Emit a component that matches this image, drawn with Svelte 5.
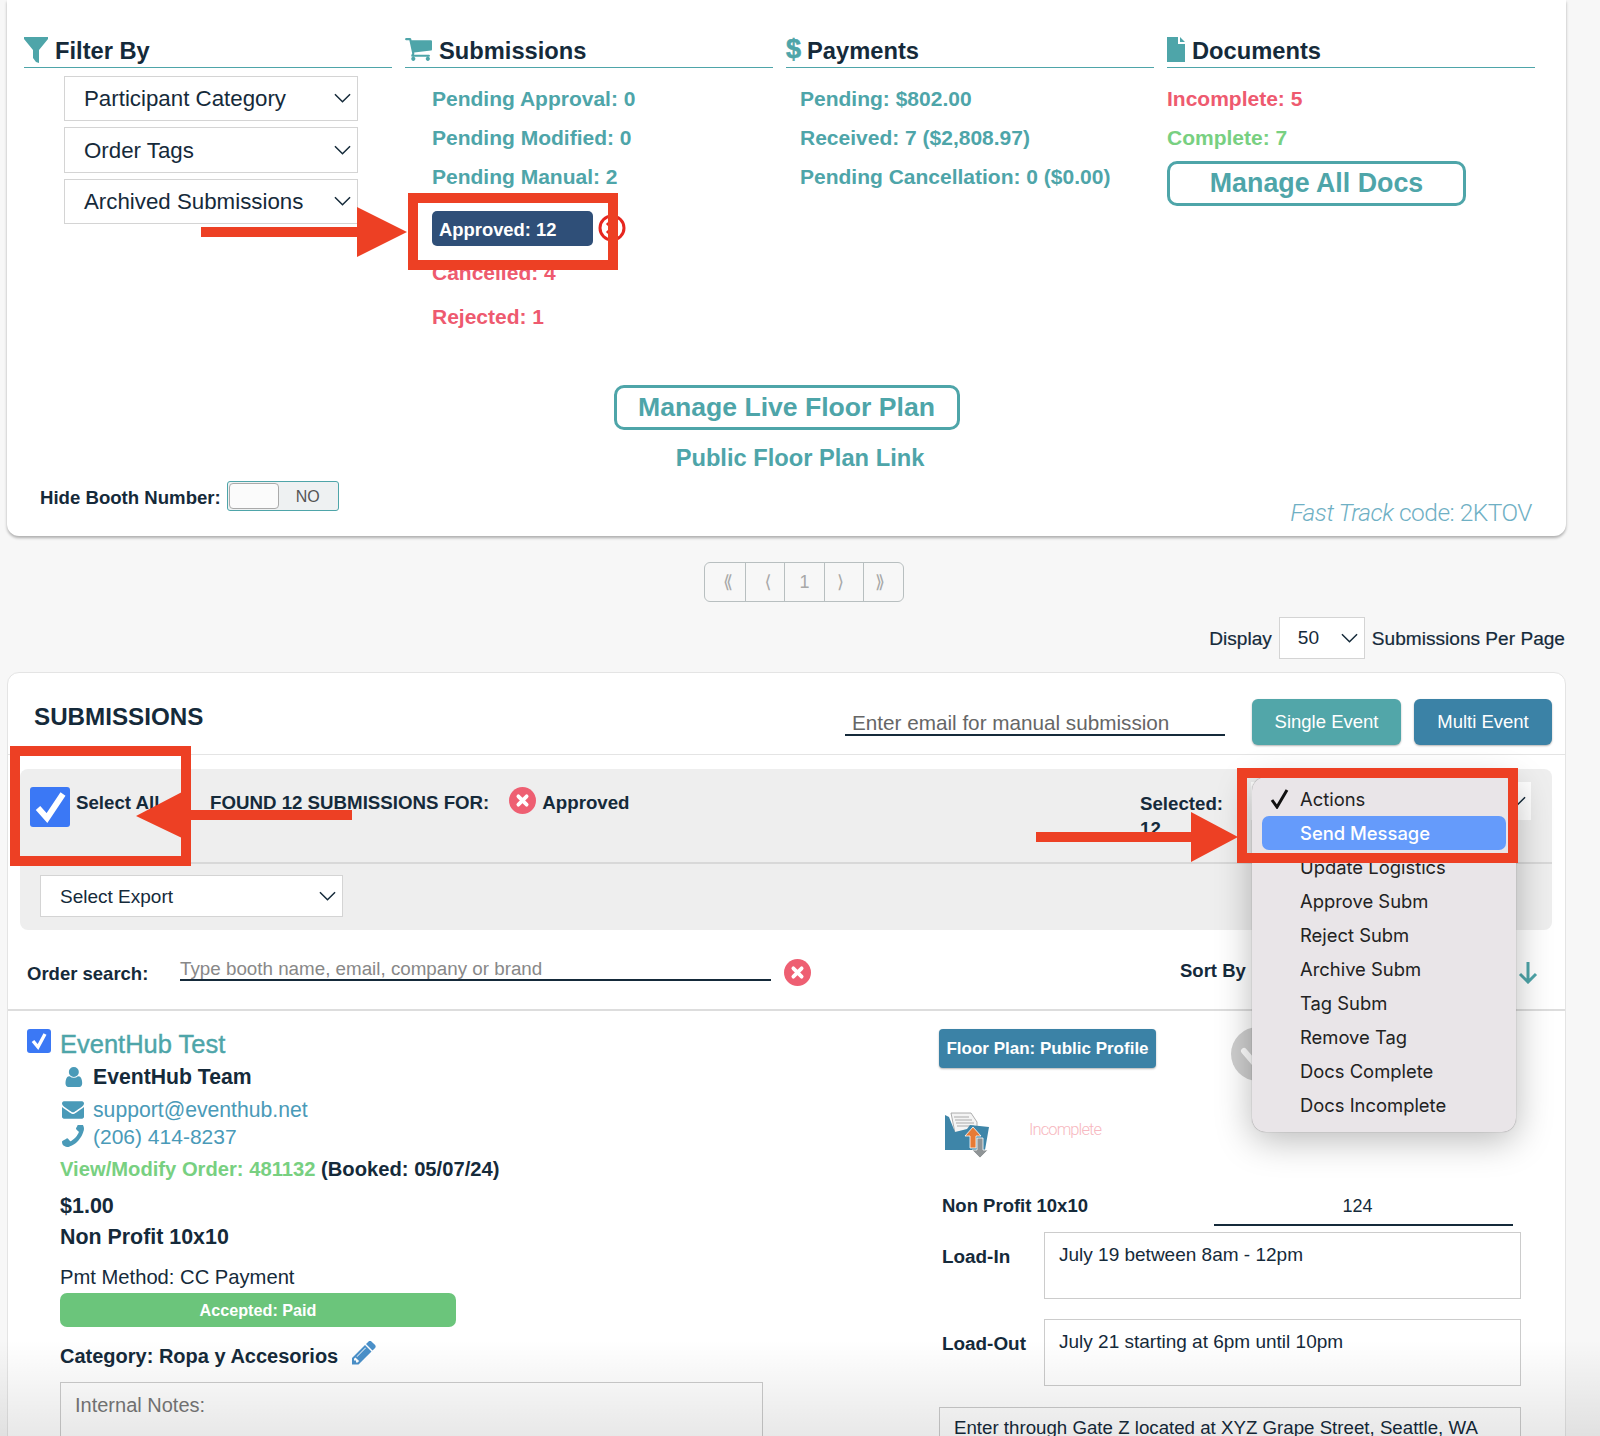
<script>
	const pendingStats = ['Pending Approval: 0', 'Pending Modified: 0', 'Pending Manual: 2'];
	const paymentStats = ['Pending: $802.00', 'Received: 7 ($2,808.97)', 'Pending Cancellation: 0 ($0.00)'];
	const filters = ['Participant Category', 'Order Tags', 'Archived Submissions'];
	const pages = ['⟪', '⟨', '1', '⟩', '⟫'];
	const actions = [
		'Actions',
		'Send Message',
		'Update Logistics',
		'Approve Subm',
		'Reject Subm',
		'Archive Subm',
		'Tag Subm',
		'Remove Tag',
		'Docs Complete',
		'Docs Incomplete'
	];

	const cartPath =
		'M704 1536q0 52-38 90t-90 38-90-38-38-90 38-90 90-38 90 38 38 90zm896 0q0 52-38 90t-90 38-90-38-38-90 38-90 90-38 90 38 38 90zm128-1088v512q0 24-16.500 42.500t-40.500 21.500l-1044 122q13 60 13 70 0 16-24 64h920q26 0 45 19t19 45-19 45-45 19h-1024q-26 0-45-19t-19-45q0-11 8-31.500t16-36 21.500-40 15.500-29.500l-177-823h-204q-26 0-45-19t-19-45 19-45 45-19h256q16 0 28.500 6.500t19.500 15.500 13 24.500 8 26 5.500 29.500 4.500 26h1201q26 0 45 19t19 45z';
	const userPath =
		'M1536 1399q0 109-62.500 187t-150.500 78h-854q-88 0-150.500-78t-62.500-187q0-85 8.500-160.500t31.500-152 58.500-131 94-89 134.500-34.500q131 128 313 128t313-128q76 0 134.500 34.500t94 89 58.500 131 31.500 152 8.500 160.500zm-256-887q0 159-112.500 271.500t-271.500 112.500-271.500-112.500-112.500-271.500 112.500-271.500 271.500-112.500 271.500 112.500 112.500 271.500z';
	const mailPath =
		'M1792 710v794q0 66-47 113t-113 47h-1472q-66 0-113-47t-47-113v-794q44 49 101 87 362 246 497 345 57 42 92.500 65.500t94.500 48 110 24.500h2q51 0 110-24.500t94.500-48 92.500-65.500q170-123 498-345 57-39 100-87zm0-294q0 79-49 151t-122 123q-376 261-468 325-10 7-42.500 30.500t-54 38-52 32.500-57.500 27-50 9h-2q-23 0-50-9t-57.500-27-52-32.500-54-38-42.500-30.500q-91-64-262-182.500t-205-142.500q-62-42-117-115.500t-55-136.500q0-78 41.500-130t118.500-52h1472q65 0 112.500 47t47.500 113z';
	const phonePath =
		'M1600 1240q0 27-10 70.500t-21 68.500q-21 50-122 106-94 51-186 51-27 0-53-3.500t-57.500-12.500-47-14.500-55.500-20.500-49-18q-98-35-175-83-127-79-264-216t-216-264q-48-77-83-175-3-9-18-49t-20.500-55.500-14.500-47-12.500-57.500-3.500-53q0-92 51-186 56-101 106-122 25-11 68.500-21t70.500-10q14 0 21 3 18 6 53 76 11 19 30 54t35 63.500 31 53.500q3 4 17.500 25t21.500 35.500 7 28.500q0 20-28.500 50t-62 55-62 53-28.500 46q0 9 5 22.500t8.500 20.500 14 24 11.500 19q76 137 174 235t235 174q2 1 19 11.500t24 14 20.500 8.500 22.500 5q18 0 46-28.500t53-62 55-62 50-28.500q14 0 28.500 7t35.500 21.500 25 17.500q25 15 53.500 31t63.500 35 54 30q70 35 76 53 3 7 3 21z';
	const pencilPath =
		'M491 1536l91-91-235-235-91 91v107h128v128h107zm523-928q0-22-22-22-10 0-17 7l-542 542q-7 7-7 17 0 22 22 22 10 0 17-7l542-542q7-7 7-17zm-54-192l416 416-832 832h-416v-416zm683 96q0 53-37 90l-166 166-416-416 166-165q36-38 90-38 53 0 91 38l235 234q37 39 37 91z';
</script>

{#snippet chevron()}
	<svg class="chevron" viewBox="0 0 18 10" fill="none" stroke="currentColor" stroke-width="1.6">
		<path d="M1 1l8 8 8-8" />
	</svg>
{/snippet}

{#snippet clearIcon()}
	<svg class="clear-icon" viewBox="0 0 26 26">
		<circle cx="13" cy="13" r="13" fill="#ee5f72" />
		<path d="M9 9l8 8M17 9l-8 8" stroke="#fff" stroke-width="3.6" stroke-linecap="round" />
	</svg>
{/snippet}

<div class="page">
	<section class="top-card">
		<div class="stats-grid">
			<div class="stats-col">
				<h3 class="col-head">
					<svg class="funnel" viewBox="0 0 24 26"><path d="M0 0h24v2L15 13v13l-3-1-3-4v-8L0 2z" /></svg>
					Filter By
				</h3>
				<div class="filter-list">
					{#each filters as filter}
						<div class="select filter-select"><span>{filter}</span>{@render chevron()}</div>
					{/each}
				</div>
			</div>

			<div class="stats-col">
				<h3 class="col-head">
					<svg class="cart" viewBox="64 190 1664 1480"><path d={cartPath} /></svg>
					Submissions
				</h3>
				<div class="stat-list">
					{#each pendingStats as stat}
						<div class="stat">{stat}</div>
					{/each}
					<div class="pill">Approved: 12</div>
					<div class="stat red">Cancelled: 4</div>
					<div class="stat red rejected">Rejected: 1</div>
				</div>
			</div>

			<div class="stats-col">
				<h3 class="col-head"><span class="dollar">$</span>Payments</h3>
				<div class="stat-list payments">
					{#each paymentStats as stat}
						<div class="stat">{stat}</div>
					{/each}
				</div>
			</div>

			<div class="stats-col">
				<h3 class="col-head">
					<svg class="doc" viewBox="0 0 18 25"><path d="M0 0h11v7h7v18H0zM13 0l5 5h-5z" /></svg>
					Documents
				</h3>
				<div class="stat-list docs">
					<div class="stat red">Incomplete: 5</div>
					<div class="stat green">Complete: 7</div>
					<div class="outline-btn docs-btn">Manage All Docs</div>
				</div>
			</div>
		</div>

		<div class="floor-plan">
			<div class="outline-btn live-btn">Manage Live Floor Plan</div>
			<div class="floor-link">Public Floor Plan Link</div>
		</div>

		<div class="card-foot">
			<div class="hide-booth">
				<span>Hide Booth Number:</span>
				<div class="toggle">
					<span class="toggle-knob"></span>
					<span class="toggle-label">NO</span>
				</div>
			</div>
			<div class="fast-track"><i>Fast Track</i> code: 2KTOV</div>
		</div>
	</section>

	<nav class="pager">
		<div class="pager-box">
			{#each pages as page, i}
				<span class="pager-cell" class:back={i < 2} class:next={i > 2}>{page}</span>
			{/each}
		</div>
	</nav>

	<div class="per-page">
		<span>Display</span>
		<div class="select count-select">50{@render chevron()}</div>
		<span>Submissions Per Page</span>
	</div>

	<section class="list-card">
		<header class="list-head">
			<h2>SUBMISSIONS</h2>
			<div class="manual-input">Enter email for manual submission</div>
			<div class="btn btn-teal">Single Event</div>
			<div class="btn btn-blue">Multi Event</div>
		</header>

		<div class="panel">
			<div class="panel-top">
				<div class="check-big">
					<svg viewBox="0 0 40 40"><path d="M8 21l9 10L33 7" fill="none" stroke="#fff" stroke-width="6" /></svg>
				</div>
				<span class="select-all">Select All</span>
				<span class="found">FOUND 12 SUBMISSIONS FOR:</span>
				{@render clearIcon()}
				<span class="found-value">Approved</span>
				<div class="selected">Selected:<br />12</div>
				<div class="select action-select">{@render chevron()}</div>
			</div>
			<div class="panel-bottom">
				<div class="select export-select"><span>Select Export</span>{@render chevron()}</div>
			</div>
		</div>

		<div class="search-row">
			<span class="search-label">Order search:</span>
			<div class="search-input">Type booth name, email, company or brand</div>
			{@render clearIcon()}
			<span class="sort-label">Sort By :</span>
			<svg class="sort-arrow" viewBox="0 0 20 22" fill="none" stroke="#4ea5a9" stroke-width="3">
				<path d="M10 0v20M2 12l8 8 8-8" />
			</svg>
		</div>

		<article class="order">
			<div class="check-small">
				<svg viewBox="0 0 24 24"><path d="M6 12l5 6 7-13" fill="none" stroke="#fff" stroke-width="3.4" /></svg>
			</div>
			<div class="order-left">
				<div class="org-name">EventHub Test</div>
				<div class="contact contact-name">
					<svg class="contact-icon" viewBox="128 128 1408 1536"><path d={userPath} /></svg>
					EventHub Team
				</div>
				<div class="contact contact-link">
					<svg class="contact-icon" viewBox="0 256 1792 1408"><path d={mailPath} /></svg>
					support@eventhub.net
				</div>
				<div class="contact contact-link phone">
					<svg class="contact-icon phone-icon" viewBox="190 256 1410 1400" preserveAspectRatio="none"><path d={phonePath} /></svg>
					(206) 414-8237
				</div>
				<div class="order-link"><span class="green">View/Modify Order: 481132</span> (Booked: 05/07/24)</div>
				<div class="price">$1.00</div>
				<div class="ticket">Non Profit 10x10</div>
				<div class="pmt">Pmt Method: CC Payment</div>
				<div class="paid">Accepted: Paid</div>
				<div class="category">
					Category: Ropa y Accesorios
					<svg class="pencil" viewBox="128 256 1536 1408"><path d={pencilPath} /></svg>
				</div>
				<div class="notes">Internal Notes:</div>
			</div>

			<div class="order-right">
				<div class="profile-row">
					<div class="btn-profile">Floor Plan: Public Profile</div>
					<svg class="status-circle" viewBox="0 0 54 54">
						<circle cx="27" cy="27" r="27" fill="#cfcfcf" />
						<path d="M13 24l12 14" stroke="#fff" stroke-width="6" stroke-linecap="round" />
					</svg>
				</div>
				<div class="doc-row">
					<svg class="folder" viewBox="0 0 44 46">
						<path d="M6 1h20l6 9v16H11z" fill="#f4f4f4" stroke="#999" stroke-width=".8" />
						<path d="M9 5h15M10 8h17M11 11h18M12 14h17" stroke="#aaa" stroke-width="1" />
						<path d="M0 3l4 2 6 15 12-3 3-4 19 2-4 23H0z" fill="#3e85a8" />
						<path d="M25 36h6V24h5l-8-9-8 9h5z" fill="#e87b35" stroke="#fff" stroke-width=".8" />
						<path d="M32 26h6v12h5l-8 8-8-8h5z" fill="#8f9496" stroke="#fff" stroke-width=".8" />
					</svg>
					<span class="doc-status">Incomplete</span>
				</div>
				<div class="booth-row">
					<span class="field-label">Non Profit 10x10</span>
					<div class="booth-input">124</div>
				</div>
				<div class="logistics load-in">
					<span class="field-label">Load-In</span>
					<div class="text-box">July 19 between 8am - 12pm</div>
				</div>
				<div class="logistics load-out">
					<span class="field-label">Load-Out</span>
					<div class="text-box">July 21 starting at 6pm until 10pm</div>
				</div>
				<div class="text-box wide-box">Enter through Gate Z located at XYZ Grape Street, Seattle, WA</div>
			</div>
		</article>
	</section>

	<!-- native select popup, opened over the Actions control -->
	<div class="action-menu">
		{#each actions as action, i}
			<div class="menu-row" class:active={i === 1}>
				<span class="menu-check">
					{#if i === 0}
						<svg viewBox="0 0 20 20"><path d="M2 11l5 7L17 1" fill="none" stroke="#111" stroke-width="3" /></svg>
					{/if}
				</span>
				{action}
			</div>
		{/each}
	</div>

	<div class="bottom-fade"></div>

	<!-- red markup drawn on top of the screenshot -->
	<svg class="markup" viewBox="0 0 1600 1436">
		<circle cx="612" cy="228" r="12" fill="#fff" stroke="#e6261f" stroke-width="3" />
		<path d="M607 223l10 10M617 223l-10 10" stroke="#e6261f" stroke-width="3" />
		<g fill="none" stroke="#ed4024" stroke-width="10">
			<rect x="413" y="198" width="200" height="67" />
			<rect x="15" y="751" width="171" height="110" />
			<rect x="1242" y="773" width="271" height="85" />
		</g>
		<g fill="#ed4024">
			<path d="M201 227h156v-20l50 25-50 25v-20H201z" />
			<path d="M1036 832h155v-20l47 25-47 25v-20h-155z" />
			<path d="M352 810H182v-18l-46 24 46 22v-18h170z" />
		</g>
	</svg>
</div>

<style>
	:global(body) {
		background: #f7f7f7;
		font-family: 'Liberation Sans', Arial, sans-serif;
		color: #152a3a;
	}

	.page {
		position: relative;
		width: 1600px;
		height: 1436px;
		overflow: hidden;
	}

	.top-card {
		display: flex;
		flex-direction: column;
		box-sizing: border-box;
		width: 1559px;
		height: 536px;
		margin-left: 7px;
		padding: 36px 0 0 17px;
		background: #fff;
		border-radius: 0 0 12px 12px;
		box-shadow: 0 2px 3px rgba(0, 0, 0, 0.3);
	}

	.stats-grid {
		display: grid;
		grid-template-columns: repeat(4, 368px);
		gap: 13px;
		height: 349px;
	}

	.col-head {
		display: flex;
		align-items: center;
		gap: 7px;
		box-sizing: border-box;
		height: 32px;
		margin: 0;
		border-bottom: 1px solid #4ea5a9;
		font-size: 23.7px;
		font-weight: 700;
		white-space: nowrap;
	}

	.col-head svg {
		fill: #4ea5a9;
		margin-top: -6px;
	}

	.col-head .funnel {
		width: 24px;
		height: 26px;
		margin-top: -3px;
	}

	.cart {
		width: 27px;
		height: 24px;
	}

	.col-head .doc {
		width: 18px;
		height: 25px;
		margin-top: -4px;
	}

	.dollar {
		margin: -4px -1px 0 0;
		color: #4ea5a9;
		font-size: 27px;
		-webkit-text-stroke: 0.6px #4ea5a9;
	}

	.filter-list {
		display: flex;
		flex-direction: column;
		gap: 6px;
		margin: 7.5px 0 0 40px;
		width: 294px;
	}

	.select {
		display: flex;
		align-items: center;
		justify-content: space-between;
		box-sizing: border-box;
		background: #fff;
		border: 1px solid #d4d4d4;
	}

	.chevron {
		flex: none;
		width: 17px;
		height: 10px;
		color: #152a3a;
	}

	.filter-select {
		height: 45.5px;
		padding: 0 6px 0 19px;
		font-size: 22.3px;
	}

	.filter-select span {
		margin-top: 2px;
	}

	.stat-list {
		display: flex;
		flex-direction: column;
		padding: 11px 0 0 27px;
	}

	.payments {
		padding-left: 14px;
	}

	.docs {
		padding-left: 0;
	}

	.stat {
		height: 39px;
		line-height: 39px;
		font-size: 21px;
		font-weight: 700;
		color: #4ea5a9;
		white-space: nowrap;
	}

	.red {
		color: #ee5a6f;
	}

	.green {
		color: #78d081;
	}

	.rejected {
		margin-top: 5px;
	}

	.pill {
		box-sizing: border-box;
		width: 161px;
		height: 35px;
		margin: 15px 0 7px;
		padding-left: 7px;
		line-height: 38px;
		border-radius: 5px;
		background: #2f4f78;
		color: #fff;
		font-size: 18.4px;
		font-weight: 700;
	}

	.outline-btn {
		box-sizing: border-box;
		height: 45px;
		line-height: 39px;
		text-align: center;
		border: 3px solid #4ea5a9;
		border-radius: 10px;
		color: #4ea5a9;
		font-size: 26.8px;
		font-weight: 700;
		white-space: nowrap;
	}

	.docs-btn {
		width: 299px;
		margin-top: 4px;
	}

	.floor-plan {
		display: flex;
		flex-direction: column;
		align-items: center;
		margin-left: -17px;
	}

	.live-btn {
		width: 346px;
		font-size: 26.6px;
	}

	.floor-link {
		margin: 13px 0 0 27px;
		line-height: 30px;
		color: #4ea5a9;
		font-size: 23.7px;
		font-weight: 700;
	}

	.card-foot {
		display: flex;
		justify-content: space-between;
		margin-top: 8px;
		padding: 0 34px 0 16px;
	}

	.hide-booth {
		display: flex;
		align-items: center;
		gap: 6px;
		height: 30px;
		font-size: 18.6px;
		font-weight: 700;
	}

	.hide-booth > span {
		margin-top: 3px;
	}

	.toggle {
		display: flex;
		align-items: center;
		box-sizing: border-box;
		width: 112px;
		height: 30px;
		padding: 1px;
		border: 1px solid #4ea5a9;
		border-radius: 3px;
		background: #eef1f2;
	}

	.toggle-knob {
		box-sizing: border-box;
		width: 50px;
		height: 26px;
		background: #fbfbfb;
		border: 1px solid #aaa;
		border-radius: 4px;
	}

	.hide-booth .toggle-label {
		margin: 2px 0 0 17px;
		color: #555;
		font-size: 16px;
		font-weight: 400;
	}

	.fast-track {
		margin-top: 17px;
		line-height: 30px;
		color: #6fb0c4;
		font-family: Roboto, sans-serif;
		font-size: 24.5px;
		font-weight: 300;
		letter-spacing: -0.5px;
	}

	.pager {
		display: flex;
		justify-content: center;
		margin-top: 26px;
		padding-left: 8px;
	}

	.pager-box {
		display: flex;
		box-sizing: border-box;
		height: 40px;
		border: 1px solid #b8bfc0;
		border-radius: 6px;
	}

	.pager-cell {
		box-sizing: border-box;
		width: 39.5px;
		line-height: 38px;
		text-align: center;
		color: #a8a8a8;
		font-family: 'Liberation Sans', 'DejaVu Sans', sans-serif;
		font-size: 18px;
	}

	.pager-cell.back {
		padding-left: 6px;
	}

	.pager-cell.next {
		padding-right: 7px;
	}

	.pager-cell + .pager-cell {
		border-left: 1px solid #b8bfc0;
	}

	.per-page {
		display: flex;
		align-items: center;
		justify-content: flex-end;
		gap: 7px;
		height: 42px;
		margin-top: 15px;
		padding-right: 35px;
		font-size: 19.1px;
		-webkit-text-stroke: 0.2px #152a3a;
	}

	.per-page > span {
		margin-top: 2px;
	}

	.count-select {
		width: 86px;
		height: 42px;
		padding: 0 6px 0 18px;
		-webkit-text-stroke: 0;
	}

	.list-card {
		box-sizing: border-box;
		width: 1559px;
		height: 780px;
		margin: 13px 0 0 7px;
		background: #fff;
		border: 1px solid #e4e4e4;
		border-radius: 12px 12px 0 0;
	}

	.list-head {
		display: flex;
		box-sizing: border-box;
		height: 82px;
		padding: 26px 13px 0 26px;
		border-bottom: 1px solid #e4e4e4;
	}

	.list-head h2 {
		width: 811px;
		margin: 0;
		line-height: 36px;
		font-size: 24.2px;
		font-weight: 700;
	}

	.manual-input {
		box-sizing: border-box;
		width: 380px;
		height: 37px;
		padding: 12px 0 0 7px;
		border-bottom: 2px solid #152a3a;
		color: #666;
		font-size: 20.7px;
		line-height: 24px;
		white-space: nowrap;
	}

	.btn {
		box-sizing: border-box;
		height: 46px;
		line-height: 46px;
		text-align: center;
		border-radius: 6px;
		color: #fff;
		font-size: 18.5px;
		box-shadow: 0 1px 2px rgba(0, 0, 0, 0.3);
	}

	.btn-teal {
		width: 149px;
		margin-left: 27px;
		background: #52a6a9;
	}

	.btn-blue {
		width: 138px;
		margin-left: 13px;
		background: #3b82a6;
	}

	.panel {
		height: 161px;
		margin: 14px 13px 0 12px;
		background: #eee;
		border-radius: 8px;
	}

	.panel-top {
		display: flex;
		align-items: flex-start;
		box-sizing: border-box;
		height: 95px;
		padding: 18px 20px 0 10px;
		border-bottom: 2px solid #d8d8d8;
		font-size: 18.7px;
		font-weight: 700;
		line-height: 32px;
		white-space: nowrap;
	}

	.check-big {
		width: 40px;
		height: 40px;
		border-radius: 3px;
		background: #3b78f5;
	}

	.select-all {
		margin-left: 6px;
		width: 134px;
	}

	.found-value {
		margin-left: 6px;
	}

	.panel-top .found + :global(svg) {
		margin-left: 20px;
	}

	.selected {
		margin: 4px 0 0 auto;
		width: 110px;
		line-height: 25px;
	}

	.action-select {
		justify-content: flex-end;
		width: 282px;
		height: 40px;
		margin-top: -6px;
		padding: 0 5px 0 20px;
		border-color: #eee;
		font-weight: 400;
	}

	.panel-bottom {
		padding: 11px 0 0 20px;
	}

	.export-select {
		width: 303px;
		height: 42px;
		padding: 0 6px 0 19px;
		font-size: 19px;
	}

	.export-select span {
		margin-top: 2px;
	}

	.clear-icon {
		flex: none;
		width: 27px;
		height: 27px;
	}

	.search-row {
		display: flex;
		align-items: flex-start;
		box-sizing: border-box;
		height: 81px;
		padding: 29px 0 0 19px;
		border-bottom: 2px solid #ddd;
		margin-top: 0;
	}

	.search-label,
	.sort-label {
		font-size: 18.5px;
		font-weight: 700;
		line-height: 28px;
		white-space: nowrap;
	}

	.search-label {
		width: 153px;
		margin-top: 1px;
	}

	.search-input {
		box-sizing: border-box;
		width: 591px;
		height: 23px;
		margin: -1px 13px 0 0;
		border-bottom: 2px solid #152a3a;
		color: #888;
		font-size: 18.8px;
		line-height: 22px;
	}

	.sort-label {
		margin: -2px 0 0 369px;
	}

	.sort-arrow {
		width: 20px;
		height: 22px;
		margin: 3px 27px 0 auto;
	}

	.order {
		display: flex;
		padding: 17px 0 0 19px;
	}

	.check-small {
		flex: none;
		width: 24px;
		height: 24px;
		margin-top: 1px;
		border-radius: 3px;
		background: #3b78f5;
	}

	.order-left {
		width: 879px;
		margin-left: 9px;
		flex: none;
	}

	.org-name {
		height: 32px;
		line-height: 32px;
		color: #4ea5a9;
		font-size: 25.5px;
		-webkit-text-stroke: 0.4px #4ea5a9;
	}

	.contact {
		display: flex;
		align-items: center;
		gap: 9px;
		box-sizing: border-box;
		white-space: nowrap;
	}

	.contact-icon {
		width: 22px;
		height: 20px;
		margin-left: 2px;
		fill: #4a9ab8;
	}

	.contact-name {
		height: 32px;
		padding-top: 2px;
		font-size: 21.2px;
		font-weight: 700;
	}

	.contact-link {
		height: 32px;
		padding-top: 3px;
		color: #4a9ab8;
		font-size: 21.2px;
	}

	.phone {
		height: 24px;
		padding-top: 2px;
		font-size: 21px;
	}

	.contact .phone-icon {
		transform: scaleX(-1);
		height: 24px;
	}

	.order-link {
		height: 40px;
		line-height: 42px;
		font-size: 20.2px;
		font-weight: 700;
	}

	.price {
		height: 32px;
		line-height: 36px;
		font-size: 21.5px;
		font-weight: 700;
	}

	.ticket {
		height: 33px;
		line-height: 35px;
		font-size: 21.4px;
		font-weight: 700;
	}

	.pmt {
		box-sizing: border-box;
		height: 40px;
		padding-top: 8px;
		line-height: 32px;
		font-size: 20.2px;
	}

	.paid {
		width: 396px;
		height: 34px;
		line-height: 34px;
		text-align: center;
		border-radius: 7px;
		background: #6bc57b;
		color: #fff;
		font-size: 16.2px;
		font-weight: 700;
	}

	.category {
		display: flex;
		align-items: center;
		gap: 14px;
		box-sizing: border-box;
		height: 55px;
		padding-top: 3px;
		font-size: 20px;
		font-weight: 700;
	}

	.pencil {
		width: 24px;
		height: 25px;
		margin-top: -6px;
		fill: #4a90c9;
	}

	.notes {
		box-sizing: border-box;
		width: 703px;
		height: 100px;
		padding: 11px 14px;
		border: 1px solid #ccc;
		color: #777;
		font-size: 20px;
	}

	.order-right {
		width: 582px;
		flex: none;
		margin-top: 1px;
	}

	.profile-row {
		display: flex;
		height: 39px;
	}

	.btn-profile {
		width: 217px;
		height: 39px;
		line-height: 39px;
		text-align: center;
		border-radius: 4px;
		background: #3b82a6;
		color: #fff;
		font-size: 17px;
		font-weight: 700;
		box-shadow: 0 1px 2px rgba(0, 0, 0, 0.3);
	}

	.status-circle {
		width: 54px;
		height: 54px;
		margin: -2px 0 0 75px;
	}

	.doc-row {
		display: flex;
		align-items: flex-start;
		height: 46px;
		margin: 44px 0 0 6px;
	}

	.folder {
		width: 44px;
		height: 46px;
	}

	.doc-status {
		margin: 6px 0 0 40px;
		line-height: 24px;
		color: #f7b8c0;
		font-family: Roboto, sans-serif;
		font-size: 16.5px;
		font-weight: 300;
		letter-spacing: -0.9px;
	}

	.booth-row {
		display: flex;
		height: 36px;
		margin: 32px 0 0 3px;
	}

	.field-label {
		font-size: 18.5px;
		font-weight: 700;
		line-height: 32px;
		white-space: nowrap;
	}

	.booth-input {
		box-sizing: border-box;
		width: 299px;
		height: 36px;
		margin-left: 126px;
		padding-right: 12px;
		line-height: 32px;
		text-align: center;
		border-bottom: 2px solid #152a3a;
		font-size: 18px;
	}

	.logistics {
		display: flex;
		margin-left: 3px;
	}

	.logistics .field-label {
		width: 102px;
		font-size: 18.9px;
		line-height: 50px;
	}

	.load-in {
		margin-top: 6px;
	}

	.load-out {
		margin-top: 20px;
	}

	.text-box {
		box-sizing: border-box;
		width: 477px;
		height: 67px;
		padding: 10px 14px;
		border: 1px solid #ccc;
		background: #fff;
		font-size: 19px;
		line-height: 24px;
	}

	.wide-box {
		width: 582px;
		margin-top: 21px;
		padding-top: 8px;
		font-size: 18.7px;
		white-space: nowrap;
	}

	.action-menu {
		position: absolute;
		left: 1252px;
		top: 777px;
		box-sizing: border-box;
		width: 264px;
		height: 355px;
		padding: 5px 10px;
		border-radius: 14px;
		background: #e9e5e8;
		box-shadow: 0 8px 36px rgba(0, 0, 0, 0.28), 0 0 1px rgba(0, 0, 0, 0.5);
		font-family: Inter, sans-serif;
		font-size: 18.4px;
		color: #222;
	}

	.menu-row {
		display: flex;
		align-items: center;
		height: 34px;
		padding-left: 8px;
		border-radius: 7px;
	}

	.menu-row.active {
		background: #659bfb;
		color: #fff;
		font-weight: 500;
	}

	.menu-check {
		width: 30px;
		height: 20px;
	}

	.menu-check svg {
		display: block;
		width: 20px;
		height: 20px;
	}

	.bottom-fade {
		position: absolute;
		left: 0;
		right: 0;
		bottom: 0;
		height: 96px;
		background: linear-gradient(rgba(0, 0, 0, 0), rgba(0, 0, 0, 0.09));
		pointer-events: none;
	}

	.markup {
		position: absolute;
		left: 0;
		top: 0;
		width: 1600px;
		height: 1436px;
		pointer-events: none;
	}
</style>
